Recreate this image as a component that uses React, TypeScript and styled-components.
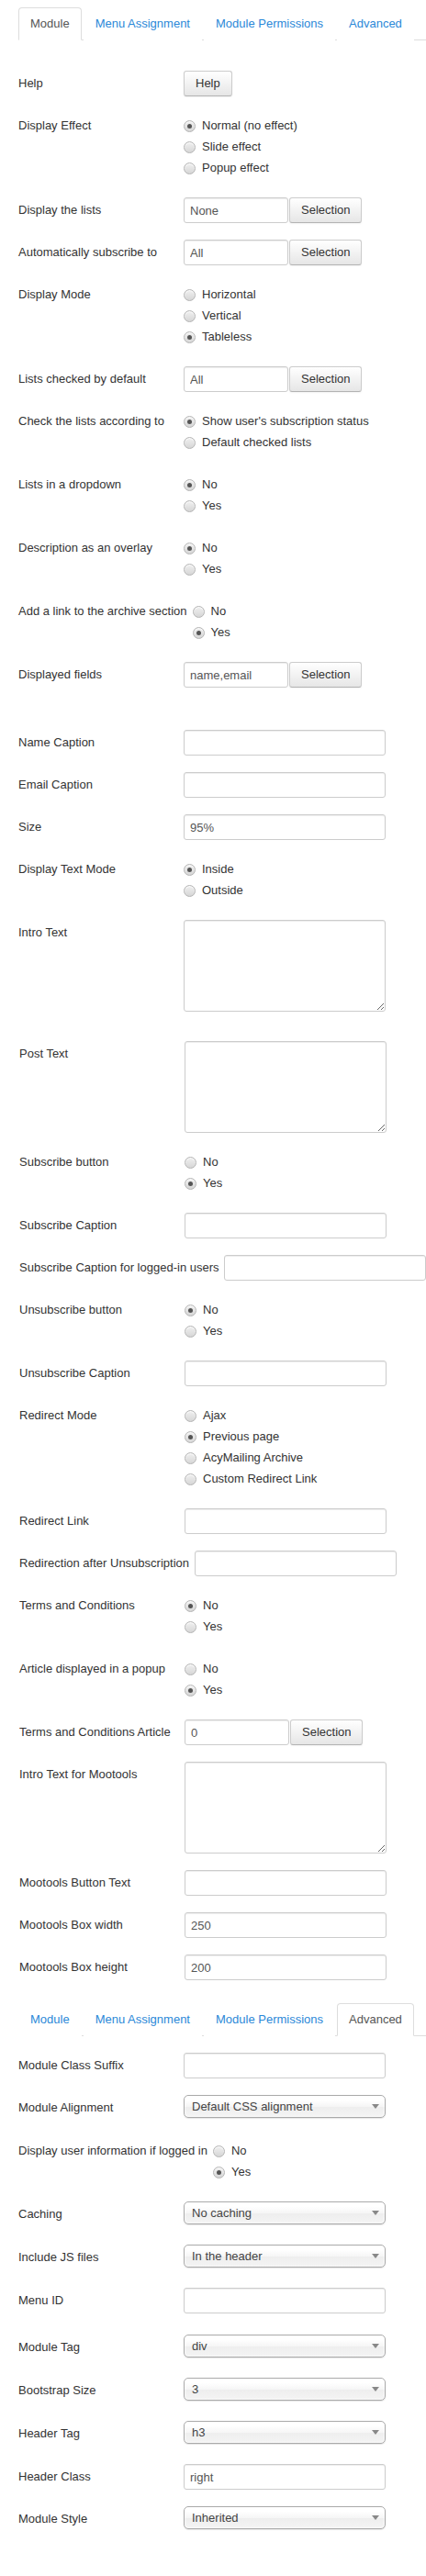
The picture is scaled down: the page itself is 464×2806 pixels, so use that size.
import React from 'react';
import styled, { createGlobalStyle } from 'styled-components';

const GlobalStyle = createGlobalStyle`
  body {
    margin: 0;
    background: #fff;
    font-family: "Liberation Sans", Arial, sans-serif;
    font-size: 13px;
    line-height: 18px;
    color: #333;
  }
`;

const Page = styled.div`
  padding: 8px 0 40px 20px;
`;

const TabList = styled.ul<{ $top?: number }>`
  display: flex;
  list-style: none;
  margin: ${(p) => p.$top || 0}px 0 0;
  padding: 0;
  border-bottom: 1px solid #ddd;
`;

const Tab = styled.li<{ $active?: boolean }>`
  margin: 0 2px -1px 0;
  padding: 8px 12px;
  line-height: 18px;
  border: 1px solid ${(p) => (p.$active ? '#ddd' : 'transparent')};
  border-bottom-color: ${(p) => (p.$active ? '#fff' : 'transparent')};
  border-radius: 4px 4px 0 0;
  background: #fff;
  color: ${(p) => (p.$active ? '#555' : '#2b88d8')};
  cursor: pointer;
`;

const Pane = styled.div<{ $top: number }>`
  padding-top: ${(p) => p.$top}px;
`;

const Group = styled.div<{ $shift?: number }>`
  padding-left: ${(p) => p.$shift || 0}px;
`;

const Row = styled.div<{ $gap?: number }>`
  display: flex;
  align-items: flex-start;
  padding-top: ${(p) => p.$gap || 0}px;
  margin-bottom: 18px;
`;

const Label = styled.label`
  box-sizing: border-box;
  min-width: 180px;
  padding: 5px 6px 0 0;
  line-height: 18px;
  white-space: nowrap;
`;

const Controls = styled.div`
  display: flex;
  flex-direction: column;
`;

const Inline = styled.div`
  display: flex;
`;

const TextInput = styled.input<{ $width?: number }>`
  box-sizing: border-box;
  width: ${(p) => p.$width || 220}px;
  height: 28px;
  padding: 4px 6px;
  border: 1px solid #ccc;
  border-radius: 3px;
  box-shadow: inset 0 1px 1px rgba(0, 0, 0, 0.075);
  font: 13px/18px "Liberation Sans", Arial, sans-serif;
  color: #555;
  background: #fff;
`;

const TextArea = styled.textarea`
  box-sizing: border-box;
  width: 220px;
  height: 100px;
  padding: 4px 6px;
  border: 1px solid #ccc;
  border-radius: 3px;
  box-shadow: inset 0 1px 1px rgba(0, 0, 0, 0.075);
  font: 13px/18px "Liberation Sans", Arial, sans-serif;
  color: #555;
`;

const Button = styled.button<{ $attached?: boolean }>`
  box-sizing: border-box;
  height: 28px;
  margin-left: ${(p) => (p.$attached ? 1 : 0)}px;
  padding: 4px 12px;
  border: 1px solid #ccc;
  border-bottom-color: #b3b3b3;
  border-radius: 3px;
  background: linear-gradient(#fff, #e6e6e6);
  box-shadow: inset 0 1px 0 rgba(255, 255, 255, 0.2), 0 1px 2px rgba(0, 0, 0, 0.05);
  font: 13px/18px "Liberation Sans", Arial, sans-serif;
  color: #333;
`;

const RadioList = styled.div`
  display: flex;
  flex-direction: column;
  padding-top: 5px;
`;

const RadioItem = styled.div`
  display: flex;
  align-items: center;
  height: 18px;
  margin-bottom: 5px;
  white-space: nowrap;
`;

const RadioDot = styled.span<{ $checked?: boolean }>`
  position: relative;
  box-sizing: border-box;
  width: 13px;
  height: 13px;
  margin-right: 7px;
  border: 1px solid #b4b4b4;
  border-radius: 50%;
  background: linear-gradient(#f0f0f0, #d6d6d6);
  box-shadow: inset 0 1px 1px rgba(255, 255, 255, 0.8);

  &::after {
    content: '';
    display: ${(p) => (p.$checked ? 'block' : 'none')};
    position: absolute;
    left: 3px;
    top: 3px;
    width: 5px;
    height: 5px;
    border-radius: 50%;
    background: #555;
  }
`;

const Select = styled.div`
  box-sizing: border-box;
  display: flex;
  align-items: center;
  justify-content: space-between;
  width: 220px;
  height: 25px;
  margin-bottom: 4px;
  padding: 0 6px 0 8px;
  border: 1px solid #aaa;
  border-radius: 5px;
  background: linear-gradient(#fff 20%, #f6f6f6 50%, #eee 52%, #f4f4f4 100%);
  box-shadow: inset 0 0 3px #fff, 0 1px 1px rgba(0, 0, 0, 0.1);
  color: #444;
`;

const Arrow = styled.span`
  width: 0;
  height: 0;
  border-left: 4px solid transparent;
  border-right: 4px solid transparent;
  border-top: 5px solid #888;
`;

type Field =
  | { kind: 'button'; label: string; text: string; gap?: number }
  | { kind: 'radio'; label: string; options: string[]; checked: number; gap?: number }
  | { kind: 'text'; label: string; value?: string; gap?: number }
  | { kind: 'pick'; label: string; value: string; gap?: number }
  | { kind: 'area'; label: string; gap?: number }
  | { kind: 'select'; label: string; value: string; gap?: number };

const FieldRow: React.FC<{ field: Field }> = ({ field }) => {
  let control: React.ReactNode = null;
  switch (field.kind) {
    case 'button':
      control = <Button>{field.text}</Button>;
      break;
    case 'radio':
      control = (
        <RadioList>
          {field.options.map((o, i) => (
            <RadioItem key={o}>
              <RadioDot $checked={i === field.checked} />
              {o}
            </RadioItem>
          ))}
        </RadioList>
      );
      break;
    case 'text':
      control = <TextInput defaultValue={field.value || ''} />;
      break;
    case 'pick':
      control = (
        <Inline>
          <TextInput $width={114} defaultValue={field.value} />
          <Button $attached>Selection</Button>
        </Inline>
      );
      break;
    case 'area':
      control = <TextArea />;
      break;
    case 'select':
      control = (
        <Select>
          {field.value}
          <Arrow />
        </Select>
      );
      break;
  }
  return (
    <Row $gap={field.gap}>
      <Label>{field.label}</Label>
      <Controls>{control}</Controls>
    </Row>
  );
};

const NO_YES = ['No', 'Yes'];

const moduleTop: Field[] = [
  { kind: 'button', label: 'Help', text: 'Help' },
  { kind: 'radio', label: 'Display Effect', options: ['Normal (no effect)', 'Slide effect', 'Popup effect'], checked: 0 },
  { kind: 'pick', label: 'Display the lists', value: 'None' },
  { kind: 'pick', label: 'Automatically subscribe to', value: 'All' },
  { kind: 'radio', label: 'Display Mode', options: ['Horizontal', 'Vertical', 'Tableless'], checked: 2 },
  { kind: 'pick', label: 'Lists checked by default', value: 'All' },
  { kind: 'radio', label: 'Check the lists according to', options: ["Show user's subscription status", 'Default checked lists'], checked: 0 },
  { kind: 'radio', label: 'Lists in a dropdown', options: NO_YES, checked: 0 },
  { kind: 'radio', label: 'Description as an overlay', options: NO_YES, checked: 0 },
  { kind: 'radio', label: 'Add a link to the archive section', options: NO_YES, checked: 1 },
  { kind: 'pick', label: 'Displayed fields', value: 'name,email' },
  { kind: 'text', label: 'Name Caption', gap: 28 },
  { kind: 'text', label: 'Email Caption' },
  { kind: 'text', label: 'Size', value: '95%' },
  { kind: 'radio', label: 'Display Text Mode', options: ['Inside', 'Outside'], checked: 0 },
  { kind: 'area', label: 'Intro Text' },
];

const moduleBottom: Field[] = [
  { kind: 'area', label: 'Post Text', gap: 14 },
  { kind: 'radio', label: 'Subscribe button', options: NO_YES, checked: 1 },
  { kind: 'text', label: 'Subscribe Caption' },
  { kind: 'text', label: 'Subscribe Caption for logged-in users' },
  { kind: 'radio', label: 'Unsubscribe button', options: NO_YES, checked: 0 },
  { kind: 'text', label: 'Unsubscribe Caption' },
  { kind: 'radio', label: 'Redirect Mode', options: ['Ajax', 'Previous page', 'AcyMailing Archive', 'Custom Redirect Link'], checked: 1 },
  { kind: 'text', label: 'Redirect Link' },
  { kind: 'text', label: 'Redirection after Unsubscription' },
  { kind: 'radio', label: 'Terms and Conditions', options: NO_YES, checked: 0 },
  { kind: 'radio', label: 'Article displayed in a popup', options: NO_YES, checked: 1 },
  { kind: 'pick', label: 'Terms and Conditions Article', value: '0' },
  { kind: 'area', label: 'Intro Text for Mootools' },
  { kind: 'text', label: 'Mootools Button Text' },
  { kind: 'text', label: 'Mootools Box width', value: '250' },
  { kind: 'text', label: 'Mootools Box height', value: '200' },
];

const advanced: Field[] = [
  { kind: 'text', label: 'Module Class Suffix' },
  { kind: 'select', label: 'Module Alignment', value: 'Default CSS alignment' },
  { kind: 'radio', label: 'Display user information if logged in', options: NO_YES, checked: 1 },
  { kind: 'select', label: 'Caching', value: 'No caching' },
  { kind: 'select', label: 'Include JS files', value: 'In the header' },
  { kind: 'text', label: 'Menu ID' },
  { kind: 'select', label: 'Module Tag', value: 'div', gap: 5 },
  { kind: 'select', label: 'Bootstrap Size', value: '3' },
  { kind: 'select', label: 'Header Tag', value: 'h3' },
  { kind: 'text', label: 'Header Class', value: 'right' },
  { kind: 'select', label: 'Module Style', value: 'Inherited' },
];

const TABS = ['Module', 'Menu Assignment', 'Module Permissions', 'Advanced'];

const Tabs: React.FC<{ active: string; top?: number }> = ({ active, top }) => (
  <TabList $top={top}>
    {TABS.map((t) => (
      <Tab key={t} $active={t === active}>
        {t}
      </Tab>
    ))}
  </TabList>
);

const App: React.FC = () => {
  return (
    <Page>
      <GlobalStyle />
      <Tabs active="Module" />
      <Pane $top={33}>
        {moduleTop.map((f) => (
          <FieldRow key={f.label} field={f} />
        ))}
        <Group $shift={1}>
          {moduleBottom.map((f) => (
            <FieldRow key={f.label} field={f} />
          ))}
        </Group>
      </Pane>
      <Tabs active="Advanced" top={25} />
      <Pane $top={18}>
        {advanced.map((f) => (
          <FieldRow key={f.label} field={f} />
        ))}
      </Pane>
    </Page>
  );
};

export default App;
